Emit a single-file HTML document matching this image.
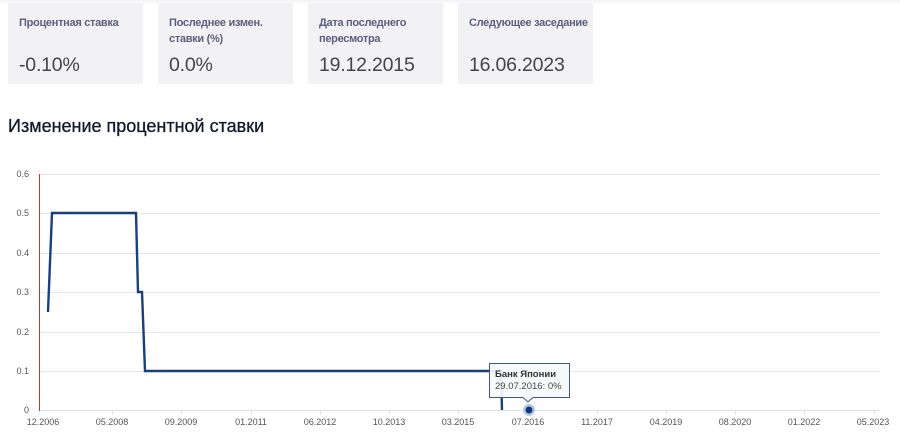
<!DOCTYPE html>
<html><head><meta charset="utf-8"><style>
body{margin:0;width:900px;height:435px;background:#fff;font-family:"Liberation Sans",sans-serif;overflow:hidden;position:relative}
.top{position:absolute;left:0;top:0;width:900px;height:5px;background:linear-gradient(#f3f3f6,#fff)}
.card{position:absolute;top:3px;width:135px;height:81px;background:#f2f2f5}
.card .l{position:absolute;left:11px;top:12px;font-size:11px;line-height:16px;color:#5a5f80;font-weight:bold;letter-spacing:-0.3px}
.card .v{position:absolute;left:11px;top:51px;font-size:19.5px;color:#44444f;letter-spacing:-0.2px}
h2{position:absolute;left:8px;top:116px;margin:0;font-size:18px;font-weight:normal;color:#111a2a;-webkit-text-stroke:0.3px #111a2a}
svg{position:absolute;left:0;top:0}
</style></head><body>
<div class="top"></div>
<div class="card" style="left:8px"><div class="l">Процентная ставка</div><div class="v">-0.10%</div></div>
<div class="card" style="left:158px"><div class="l">Последнее измен.<br>ставки (%)</div><div class="v">0.0%</div></div>
<div class="card" style="left:308px"><div class="l">Дата последнего<br>пересмотра</div><div class="v">19.12.2015</div></div>
<div class="card" style="left:458px"><div class="l">Следующее заседание</div><div class="v">16.06.2023</div></div>
<h2>Изменение процентной ставки</h2>
<svg width="900" height="435" font-family="Liberation Sans, sans-serif" font-size="9" fill="#555">
<g stroke="#e6e6e6" stroke-width="1">
<line x1="39" y1="174.5" x2="880" y2="174.5"/><line x1="39" y1="213.5" x2="880" y2="213.5"/>
<line x1="39" y1="253.5" x2="880" y2="253.5"/><line x1="39" y1="292.5" x2="880" y2="292.5"/>
<line x1="39" y1="332.5" x2="880" y2="332.5"/><line x1="39" y1="371.5" x2="880" y2="371.5"/>
<line x1="39" y1="410.5" x2="880" y2="410.5" stroke="#dde3ec"/>
</g>
<g stroke="#dde3ec"><line x1="112.5" y1="410" x2="112.5" y2="415"/><line x1="181.5" y1="410" x2="181.5" y2="415"/><line x1="251.5" y1="410" x2="251.5" y2="415"/><line x1="320.5" y1="410" x2="320.5" y2="415"/><line x1="389.5" y1="410" x2="389.5" y2="415"/><line x1="458.5" y1="410" x2="458.5" y2="415"/><line x1="527.5" y1="410" x2="527.5" y2="415"/><line x1="597.5" y1="410" x2="597.5" y2="415"/><line x1="666.5" y1="410" x2="666.5" y2="415"/><line x1="735.5" y1="410" x2="735.5" y2="415"/><line x1="804.5" y1="410" x2="804.5" y2="415"/><line x1="874.5" y1="410" x2="874.5" y2="415"/></g>
<line x1="39.5" y1="174" x2="39.5" y2="411" stroke="#c0392b" stroke-width="1"/>
<g text-anchor="end"><text x="29" y="177">0.6</text><text x="29" y="216">0.5</text><text x="29" y="256">0.4</text><text x="29" y="295">0.3</text><text x="29" y="335">0.2</text><text x="29" y="374">0.1</text><text x="29" y="413">0</text></g>
<g text-anchor="middle"><text x="43" y="425">12.2006</text><text x="112" y="425">05.2008</text><text x="181" y="425">09.2009</text><text x="251" y="425">01.2011</text><text x="320" y="425">06.2012</text><text x="389" y="425">10.2013</text><text x="458" y="425">03.2015</text><text x="528" y="425">07.2016</text><text x="597" y="425">11.2017</text><text x="666" y="425">04.2019</text><text x="735" y="425">08.2020</text><text x="804" y="425">01.2022</text><text x="873" y="425">05.2023</text></g>
<polyline points="48,312 52,213 136,213 138,292 142,292 145,371 501,371 502,410" fill="none" stroke="#1a3f7a" stroke-width="2.4"/>
<circle cx="529" cy="410" r="6" fill="#b8c8dc"/><circle cx="529" cy="410" r="3.5" fill="#0e3b7a"/>
<path d="M489.5,363.5 H569.5 V397.5 H533 L528,402 L523,397.5 H489.5 Z" fill="#f7f9fb" fill-opacity="0.92" stroke="#3c5a80" stroke-width="1"/>
<text x="495" y="377" font-weight="bold" font-size="9.5" fill="#333">Банк Японии</text>
<text x="495" y="389" font-size="9.5" fill="#444">29.07.2016: 0%</text>
</svg>
</body></html>
